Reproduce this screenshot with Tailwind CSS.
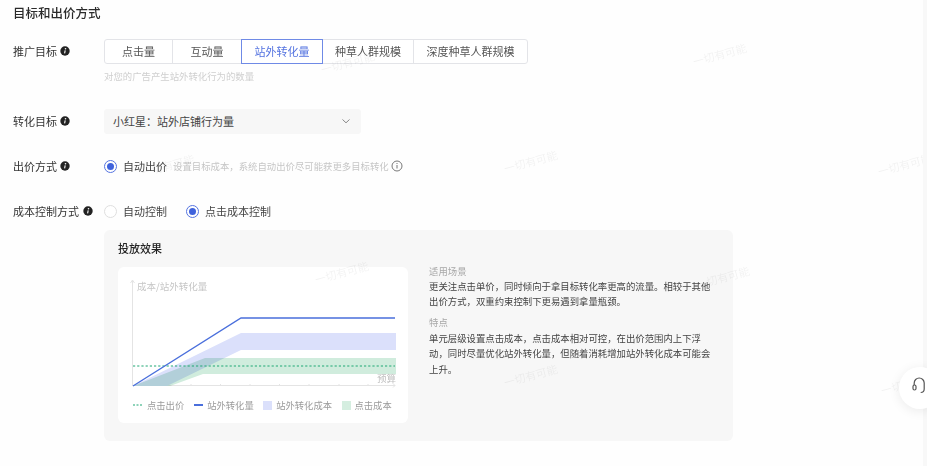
<!DOCTYPE html>
<html lang="zh-CN">
<head>
<meta charset="utf-8">
<script src="https://cdn.jsdelivr.net/npm/@tailwindcss/browser@4"></script>
</head>
<body class="bg-[#fefefe]">
<div class="relative w-[927px] h-[466px] overflow-hidden font-['Noto_Sans_CJK_SC','Liberation_Sans',sans-serif] text-[#333] blur-[0.4px]">
  <div class="w-[921px] h-full pl-[13px] flex flex-col">
    <h2 class="h-[14px] mt-[6px] text-[12.5px] leading-[14px] font-medium text-[#2a2a2a]">目标和出价方式</h2>

    <div class="flex mt-[19px] h-[25px]">
      <div class="w-[91px] flex items-center gap-[3px] pb-px text-[11px] text-[#333]">推广目标
        <svg class="w-[10px] h-[10px]" viewBox="0 0 10 10"><circle cx="5" cy="5" r="4.7" fill="#222"/><circle cx="5.5" cy="2.8" r=".8" fill="#fff"/><path d="M5.2 4.3 4.6 7.4" stroke="#fff" stroke-width="1.1"/></svg>
      </div>
      <div class="flex h-[25px] border border-[#e3e4e8] rounded-[3px] text-[11px] text-[#555] bg-white">
        <div class="w-[68px] flex items-center justify-center pb-px border-r border-[#e3e4e8]">点击量</div>
        <div class="w-[68px] flex items-center justify-center pb-px">互动量</div>
        <div class="w-[82px] -my-px flex items-center justify-center pb-px border border-[#6f8ae6] text-[#5473e0]">站外转化量</div>
        <div class="w-[91px] flex items-center justify-center pb-px border-r border-[#e3e4e8]">种草人群规模</div>
        <div class="flex-1 w-[113px] flex items-center justify-center pb-px">深度种草人群规模</div>
      </div>
    </div>
    <p class="ml-[91px] mt-[6px] h-[12px] text-[9.4px] leading-[12px] text-[#cfcfcf]">对您的广告产生站外转化行为的数量</p>

    <div class="flex mt-[27px] h-[25px]">
      <div class="w-[91px] flex items-center gap-[3px] pb-px text-[11px]">转化目标
        <svg class="w-[10px] h-[10px]" viewBox="0 0 10 10"><circle cx="5" cy="5" r="4.7" fill="#222"/><circle cx="5.5" cy="2.8" r=".8" fill="#fff"/><path d="M5.2 4.3 4.6 7.4" stroke="#fff" stroke-width="1.1"/></svg>
      </div>
      <div class="w-[257px] h-[25px] rounded-[3px] bg-[#f7f7f7] flex items-center justify-between pb-px pl-[9px] pr-[10px] text-[11px] text-[#444]">
        <span>小红星：站外店铺行为量</span>
        <svg class="w-[10px] h-[10px]" viewBox="0 0 10 10" fill="none" stroke="#888" stroke-width="1"><path d="M1.5 3.5 5 6.8l3.5-3.3"/></svg>
      </div>
    </div>

    <div class="flex mt-[25px] h-[14px] items-center">
      <div class="w-[91px] flex items-center gap-[3px] text-[11px]">出价方式
        <svg class="w-[10px] h-[10px]" viewBox="0 0 10 10"><circle cx="5" cy="5" r="4.7" fill="#222"/><circle cx="5.5" cy="2.8" r=".8" fill="#fff"/><path d="M5.2 4.3 4.6 7.4" stroke="#fff" stroke-width="1.1"/></svg>
      </div>
      <span class="w-[13px] h-[13px] rounded-full border border-[#5473e0] flex items-center justify-center"><span class="w-[7px] h-[7px] rounded-full bg-[#3f62dc]"></span></span>
      <span class="ml-[6px] text-[11px] text-[#444]">自动出价</span>
      <span class="ml-[6px] text-[9.4px] text-[#c6c6c6]">设置目标成本，系统自动出价尽可能获更多目标转化</span>
      <svg class="ml-[2px] w-[12px] h-[12px]" viewBox="0 0 12 12" fill="none" stroke="#777"><circle cx="6" cy="6" r="5"/><path d="M6 5v3.5M6 3v1"/></svg>
    </div>

    <div class="flex mt-[31px] h-[14px] items-center">
      <div class="w-[91px] flex items-center gap-[4px] text-[11px] whitespace-nowrap">成本控制方式
        <svg class="w-[10px] h-[10px] shrink-0" viewBox="0 0 10 10"><circle cx="5" cy="5" r="4.7" fill="#222"/><circle cx="5.5" cy="2.8" r=".8" fill="#fff"/><path d="M5.2 4.3 4.6 7.4" stroke="#fff" stroke-width="1.1"/></svg>
      </div>
      <span class="w-[13px] h-[13px] rounded-full border border-[#dedede] bg-white"></span>
      <span class="ml-[6px] text-[11px] text-[#444]">自动控制</span>
      <span class="ml-[19px] w-[13px] h-[13px] rounded-full border border-[#5473e0] flex items-center justify-center"><span class="w-[7px] h-[7px] rounded-full bg-[#3f62dc]"></span></span>
      <span class="ml-[6px] text-[11px] text-[#444]">点击成本控制</span>
    </div>

    <section class="ml-[91px] mt-[12px] w-[629px] h-[211px] rounded-[6px] bg-[#f7f7f7] flex flex-col px-[14px] pt-[11px]">
      <h3 class="h-[14px] text-[11px] leading-[14px] font-medium text-[#222]">投放效果</h3>
      <div class="flex mt-[12px] gap-[21px]">
        <div class="relative w-[290px] h-[156px] rounded-[6px] bg-white shrink-0 flex flex-col justify-end pb-[11px]">
          <svg class="absolute left-0 top-0 w-[290px] h-[130px]" viewBox="118 267 290 130" fill="none">
            <path d="M132.5 280V386M132.5 280l-2 3M132.5 280l2 3M133 385.5H395M393 383.5l2 2-2 2M191 384v2M220.5 384v2M250 384v2M279.5 384v2M309 384v2M339 384v2M368 384v2" stroke="#e4e4e4"/>
            <path d="M133 386 241 333H396V350H241L167 386Z" fill="#dbe0fb"/>
            <path class="mix-blend-multiply" d="M133 386 205 358H396V374H203L170 386Z" fill="#d0ecdd"/>
            <path d="M133 366H395" stroke="#1fa874" stroke-dasharray="2.2 2"/>
            <path d="M133 386 241 318H395" stroke="#4a6fdc" stroke-width="1.4"/>
          </svg>
          <span class="absolute left-[19px] top-[12px] text-[9.5px] leading-[14px] text-[#c6c6c6]">成本/站外转化量</span>
          <span class="absolute left-[259px] top-[104px] text-[9.5px] leading-[14px] text-[#c0c0c0]">预算</span>
          <div class="flex items-center pl-[15px] text-[9.3px] leading-[14px] text-[#9b9b9b]">
            <svg class="w-[10px] h-[2px]" viewBox="0 0 10 2"><path d="M0 1H10" stroke="#1fa874" stroke-width="1.2" stroke-dasharray="2 1.5"/></svg><span class="ml-[4px]">点击出价</span>
            <span class="ml-[10px] w-[9px] h-[1.5px] bg-[#4a6fdc]"></span><span class="ml-[4px]">站外转化量</span>
            <span class="ml-[9.5px] w-[9px] h-[9px] bg-[#dbe0fb]"></span><span class="ml-[4px]">站外转化成本</span>
            <span class="ml-[9.5px] w-[9px] h-[9px] bg-[#d5eee0]"></span><span class="ml-[4px]">点击成本</span>
          </div>
        </div>
        <div class="w-[284px] -mt-[2px] text-[9.4px] leading-[15.5px] text-[#444]">
          <p class="text-[#a8a8a8] leading-[13.5px]">适用场景</p>
          <p>更关注点击单价，同时倾向于拿目标转化率更高的流量。相较于其他出价方式，双重约束控制下更易遇到拿量瓶颈。</p>
          <p class="mt-[5.5px] text-[#a8a8a8]">特点</p>
          <p>单元层级设置点击成本，点击成本相对可控，在出价范围内上下浮动，同时尽量优化站外转化量，但随着消耗增加站外转化成本可能会上升。</p>
        </div>
      </div>
    </section>
  </div>

  <!-- watermarks and overlays -->
  <span class="absolute left-[692px] top-[46px] -rotate-[15deg] whitespace-nowrap text-[11px] text-black/5">一切有可能</span>
  <span class="absolute left-[320px] top-[54px] -rotate-[15deg] whitespace-nowrap text-[11px] text-black/5">一切有可能</span>
  <span class="absolute left-[503px] top-[153px] -rotate-[15deg] whitespace-nowrap text-[11px] text-black/5">一切有可能</span>
  <span class="absolute left-[140px] top-[157px] -rotate-[15deg] whitespace-nowrap text-[11px] text-black/5">一切有可能</span>
  <span class="absolute left-[877px] top-[156px] -rotate-[15deg] whitespace-nowrap text-[11px] text-black/5">一切有可能</span>
  <span class="absolute left-[314px] top-[264px] -rotate-[15deg] whitespace-nowrap text-[11px] text-black/5">一切有可能</span>
  <span class="absolute left-[695px] top-[269px] -rotate-[15deg] whitespace-nowrap text-[11px] text-black/5">一切有可能</span>
  <span class="absolute left-[503px] top-[367px] -rotate-[15deg] whitespace-nowrap text-[11px] text-black/5">一切有可能</span>
  <span class="absolute left-[880px] top-[375px] -rotate-[15deg] whitespace-nowrap text-[11px] text-black/5">一切有可能</span>
  <div class="absolute right-0 top-0 w-[4px] h-full bg-[#f8f8f8]"></div>
  <div class="absolute left-[899px] top-[367px] w-[42px] h-[42px] rounded-full bg-white shadow-[0_2px_12px_rgba(0,0,0,0.08)] flex items-center pl-[13px] pb-[5px]">
    <svg class="w-[14px] h-[17px] shrink-0" viewBox="0 0 14 17" fill="none" stroke="#555" stroke-width="1.2"><path d="M2.2 8V6a5 5 0 0 1 10 0v6c0 2-1.5 3.5-3.5 3.5"/><rect x="1" y="8" width="3" height="5" rx="1.5"/></svg>
  </div>
</div>
</body>
</html>
